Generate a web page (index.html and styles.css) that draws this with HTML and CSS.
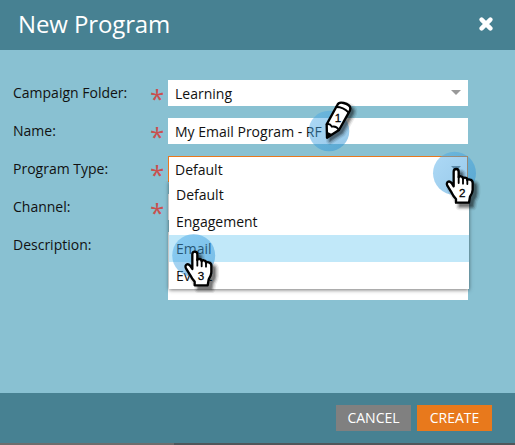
FILE: index.html
```html
<!DOCTYPE html>
<html lang="en">
<head>
<meta charset="utf-8">
<title>New Program</title>
<link rel="stylesheet" href="styles.css">
</head>
<body>
<div class="dialog">
  <header class="header">
    <h1>New Program</h1>
    <svg class="close" viewBox="0 0 14 14"><path d="M2.6 2.6 11.4 11.4M11.4 2.6 2.6 11.4"/></svg>
  </header>
  <main class="form">
    <div class="row"><label>Campaign Folder:</label><span class="req">*</span><div class="field">Learning<i class="arrow"></i></div></div>
    <div class="row"><label>Name:</label><span class="req">*</span><div class="field">My Email Program - RF</div></div>
    <div class="row"><label>Program Type:</label><span class="req">*</span>
      <div class="field active">Default<i class="arrow"></i>
        <ul class="menu"><li>Default</li><li>Engagement</li><li class="selected">Email</li><li>Event</li></ul>
      </div>
    </div>
    <div class="row"><label>Channel:</label><span class="req">*</span><div class="field"></div></div>
    <div class="row"><label>Description:</label><span class="req"></span><div class="field area"></div></div>
  </main>
  <footer class="footer"><button class="cancel">CANCEL</button><button class="create">CREATE</button></footer>
  <div class="edge"></div>
  <svg class="marks" viewBox="0 0 515 445">
    <defs>
      <linearGradient id="blue" x1="0" y1="0" x2="1" y2="1"><stop offset="0" stop-color="#4aabea" stop-opacity=".45"/><stop offset="1" stop-color="#2a8fd2" stop-opacity=".5"/></linearGradient>
      <path id="hand" d="M97 88Q97 80 104.500 80Q112 80 112 88V105Q114 101 119 102Q125 103 125 109Q127 105 132 106Q138 107 138 113Q141 110 146 112Q154 114 154 122V142Q154 151 146 163L143 181H104V170Q96 162 91 151L78 130Q74 121 81 118Q87 116 92 124L97 132Z"/>
      <path id="pencil" d="M81 143 80 103 112 45Q116 35 131 39Q150 44 151 54L150 61 117 120Z"/>
      <g id="hand-shade" transform="translate(11 11)"><use href="#hand" class="shade s1"/><use href="#hand" class="shade s2"/><use href="#hand" class="shade s3"/><use href="#hand" class="shade s4"/></g>
      <g id="pencil-shade" transform="translate(9 9)"><use href="#pencil" class="shade s1"/><use href="#pencil" class="shade s2"/><use href="#pencil" class="shade s3"/><use href="#pencil" class="shade s4"/></g>
    </defs>
    <circle class="halo" cx="329" cy="131" r="20.300"/>
    <circle class="halo" cx="454.500" cy="173.300" r="21.500"/>
    <circle class="halo" cx="193.700" cy="255.500" r="21.500"/>
    <g transform="translate(300 90) scale(.33333)">
      <use href="#pencil-shade"/>
      <use href="#pencil" class="outline"/>
      <path class="line" d="M109 51Q130 51 146 68M80 103Q89 99 96 110Q109 107 117 120"/>
      <path d="M81 143V125L97 133Z"/>
      <text x="104" y="97">1</text>
    </g>
    <g transform="translate(421.333 142.333) scale(.33333)">
      <use href="#hand-shade"/>
      <use href="#hand" class="outline"/><path class="line" d="M112 103V122M125 107V124M138 111V125"/><text x="113" y="164">2</text>
    </g>
    <g transform="translate(160 225) scale(.33333)">
      <use href="#hand-shade"/>
      <use href="#hand" class="outline"/><path class="line" d="M112 103V122M125 107V124M138 111V125"/><text x="113" y="164">3</text>
    </g>
  </svg>
</div>
</body>
</html>
```
FILE: styles.css
```css
* { box-sizing: border-box; }
body { margin: 0; font: 14px/20px "Open Sans", sans-serif; color: #111; }
.dialog { position: relative; width: 515px; height: 445px; display: flex; flex-direction: column; overflow: hidden; background: #89c1d2; }
.header { height: 50px; flex: none; background: #478192; display: flex; align-items: center; justify-content: space-between; padding: 0 22px 3px 18px; color: #fff; }
h1 { margin: 0; font-size: 24px; line-height: 32px; font-weight: 400; letter-spacing: -.12px; }
.close { width: 14px; height: 14px; margin-top: 1px; }
.close path { stroke: #fff; stroke-width: 4.4; stroke-linecap: round; fill: none; }
.form { flex: 1; padding: 30px 47px 0 13px; display: flex; flex-direction: column; gap: 12px; }
.row { display: flex; height: 26px; }
label { width: 137px; line-height: 26px; }
.req { width: 18px; color: #c9504f; font-size: 26px; line-height: 37px; height: 26px; }
.field { position: relative; width: 300px; height: 26px; background: #fff; padding: 0 7px; line-height: 28px; color: #111; }
.area { height: 68px; }
.active { border: 1px solid #e8781e; border-bottom: 0; padding-left: 6px; line-height: 25px; }
.arrow { position: absolute; right: 7px; top: 10px; border: 5px solid transparent; border-top-color: #999; border-bottom: 0; }
.active .arrow { right: 6px; top: 9px; border-top-color: #777; }
.menu { position: absolute; z-index: 2; left: 0; top: 24px; width: 300px; margin: 0; padding: 0; list-style: none; background: #fff; box-shadow: 0 1px 4px rgba(0,0,0,.55); clip-path: inset(0 -6px -6px -6px); }
.menu li { height: 27px; line-height: 28px; padding-left: 7px; }
.menu .selected { background: #c1e8f9; }
.footer { height: 50px; flex: none; background: #478192; display: flex; align-items: flex-start; justify-content: flex-end; gap: 6px; padding: 12px 23px 0 0; }
button { width: 75px; height: 26px; border: 0; padding: 0; color: #fff; font: 14px/26px "Open Sans", sans-serif; }
.cancel { background: #808080; }
.create { background: #e8791c; }
.edge { height: 2px; flex: none; background: linear-gradient(90deg, #6d6d6d 174px, #50565a 174px); }
.marks { position: absolute; z-index: 3; inset: 0; width: 515px; height: 445px; pointer-events: none; }
.halo { fill: url(#blue); }
.outline { fill: #fff; stroke: #000; stroke-width: 7; stroke-linejoin: round; }
.shade { fill: #000; stroke: #000; stroke-linejoin: round; }
.s1 { stroke-width: 24px; opacity: .07; }
.s2 { stroke-width: 16px; opacity: .12; }
.s3 { stroke-width: 8px; opacity: .2; }
.s4 { stroke-width: 1px; opacity: .25; }
.line { fill: none; stroke: #000; stroke-width: 5.5; stroke-linecap: round; }
.marks text { font: 35px "Liberation Sans", sans-serif; fill: #000; stroke: #000; stroke-width: .8; }
```
